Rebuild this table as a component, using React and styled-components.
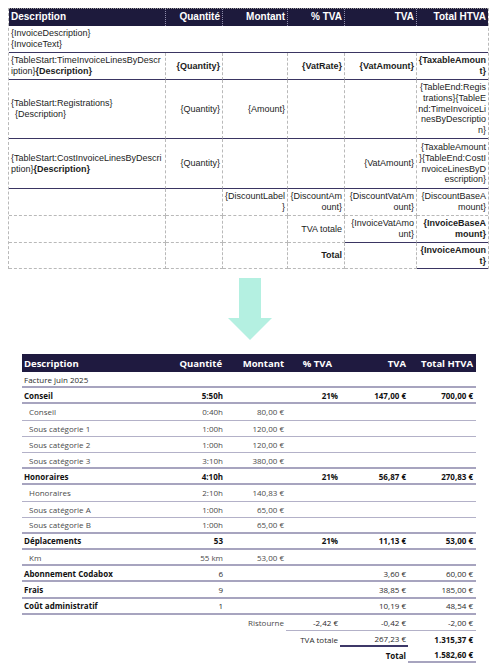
import React from 'react'
import styled, { createGlobalStyle } from 'styled-components'

const GlobalStyle = createGlobalStyle`
  body {
    margin: 0;
    background: #ffffff;
  }
`

const Page = styled.div`
  width: 493px;
  padding: 8px;
  box-sizing: border-box;
  display: flex;
  flex-direction: column;
`

/* ---------- template table (top) ---------- */

const TplTable = styled.div`
  width: 481px;
  box-sizing: border-box;
  border-left: 1px dashed #b9b9b9;
  border-right: 1px dashed #b9b9b9;
  font-family: "Liberation Sans", Arial, sans-serif;
  font-size: 9px;
  line-height: 10.8px;
  color: #1c1c1c;
`

const TplRow = styled.div`
  display: grid;
  grid-template-columns: 157px 57px 65px 57px 72px 71px;
  height: ${p => p.$h}px;
`

const TplHead = styled(TplRow)`
  background: #1d1a3c;
  color: #ffffff;
  font-size: 10px;
  font-weight: bold;
  border-top: 1px dotted #9a9a9a;
`

const TplCell = styled.div`
  display: flex;
  align-items: center;
  justify-content: ${p => (p.$right ? 'flex-end' : 'flex-start')};
  text-align: ${p => (p.$right ? 'right' : 'left')};
  padding: 0 2px;
  box-sizing: border-box;
  white-space: nowrap;
  grid-column: ${p => (p.$span ? `span ${p.$span}` : 'auto')};
  border-right: ${p => (p.$last ? 'none' : '1px dashed #b9b9b9')};
  border-bottom: ${p => (p.$solid ? '1px solid #3a3562' : '1px dashed #b9b9b9')};
  font-weight: ${p => (p.$bold ? 'bold' : 'normal')};
`

const TplHeadCell = styled(TplCell)`
  border-right: ${p => (p.$last ? 'none' : '1px dotted #8f8cab')};
  border-bottom: none;
  font-weight: bold;
`

const Indent = styled.span`
  padding-left: 4px;
`

/* ---------- arrow ---------- */

const ArrowWrap = styled.div`
  width: 481px;
  display: flex;
  justify-content: center;
  margin-top: 9px;
  padding-left: 2px;
  box-sizing: border-box;
`

/* ---------- rendered table (bottom) ---------- */

const Invoice = styled.div`
  width: 454px;
  margin: 14px 0 0 14px;
  font-family: "Open Sans", "Noto Sans", sans-serif;
  font-size: 8px;
  color: #2b2b2b;
`

const InvRow = styled.div`
  display: grid;
  grid-template-columns: 149px 54px 61px 54px 68px 68px;
  height: ${p => p.$h || 16.2}px;
  box-sizing: border-box;
  border-bottom: ${p => (p.$thick ? '2px solid #a7a4bf' : p.$thin ? '1px solid #b3b1c8' : 'none')};
`

const InvHead = styled(InvRow)`
  background: #1f1a40;
  color: #ffffff;
  font-size: 9.5px;
  font-weight: 700;
`

const InvCell = styled.div`
  display: flex;
  align-items: center;
  justify-content: ${p => (p.$right ? 'flex-end' : 'flex-start')};
  padding: 0 ${p => p.$pr ?? 2}px 0 ${p => (p.$indent ? 7 : 2)}px;
  box-sizing: border-box;
  white-space: nowrap;
  font-weight: ${p => (p.$bold ? 700 : 'inherit')};
  color: ${p => (p.$bold ? '#111111' : p.$sub ? '#4a4a4a' : 'inherit')};
  border-bottom: ${p => p.$line || 'none'};
`

const lines = [
  { d: 'Facture juin 2025' },
  { d: 'Conseil', g: true, bv: true, q: '5:50h', r: '21%', v: '147,00 €', t: '700,00 €' },
  { d: 'Conseil', sub: true, q: '0:40h', m: '80,00 €' },
  { d: 'Sous catégorie 1', sub: true, q: '1:00h', m: '120,00 €' },
  { d: 'Sous catégorie 2', sub: true, q: '1:00h', m: '120,00 €' },
  { d: 'Sous catégorie 3', sub: true, q: '3:10h', m: '380,00 €' },
  { d: 'Honoraires', g: true, bv: true, q: '4:10h', r: '21%', v: '56,87 €', t: '270,83 €' },
  { d: 'Honoraires', sub: true, q: '2:10h', m: '140,83 €' },
  { d: 'Sous catégorie A', sub: true, q: '1:00h', m: '65,00 €' },
  { d: 'Sous catégorie B', sub: true, q: '1:00h', m: '65,00 €' },
  { d: 'Déplacements', g: true, bv: true, q: '53', r: '21%', v: '11,13 €', t: '53,00 €' },
  { d: 'Km', sub: true, q: '55 km', m: '53,00 €' },
  { d: 'Abonnement Codabox', g: true, q: '6', v: '3,60 €', t: '60,00 €' },
  { d: 'Frais', g: true, q: '9', v: '38,85 €', t: '185,00 €' },
  { d: 'Coût administratif', g: true, q: '1', v: '10,19 €', t: '48,54 €' },
]

const thin = '1px solid #b3b1c8'
const navy = '2px solid #3d3868'
const lav = '2px solid #a7a4bf'

function TemplateTable() {
  return (
    <TplTable>
      <TplHead $h={17}>
        <TplHeadCell>Description</TplHeadCell>
        <TplHeadCell $right>Quantité</TplHeadCell>
        <TplHeadCell $right>Montant</TplHeadCell>
        <TplHeadCell $right>% TVA</TplHeadCell>
        <TplHeadCell $right>TVA</TplHeadCell>
        <TplHeadCell $right $last>Total HTVA</TplHeadCell>
      </TplHead>

      <TplRow $h={27}>
        <TplCell $span={6} $last $solid>
          <span>{'{InvoiceDescription}'}<br />{'{InvoiceText}'}</span>
        </TplCell>
      </TplRow>

      <TplRow $h={27}>
        <TplCell $solid>
          <span>{'{TableStart:TimeInvoiceLinesByDescr'}<br />{'iption}'}<b>{'{Description}'}</b></span>
        </TplCell>
        <TplCell $right $bold $solid>{'{Quantity}'}</TplCell>
        <TplCell $solid />
        <TplCell $right $bold $solid>{'{VatRate}'}</TplCell>
        <TplCell $right $bold $solid>{'{VatAmount}'}</TplCell>
        <TplCell $right $bold $solid $last>
          <span>{'{TaxableAmoun'}<br />{'t}'}</span>
        </TplCell>
      </TplRow>

      <TplRow $h={59}>
        <TplCell $solid>
          <span>{'{TableStart:Registrations}'}<br /><Indent>{'{Description}'}</Indent></span>
        </TplCell>
        <TplCell $right $solid>{'{Quantity}'}</TplCell>
        <TplCell $right $solid>{'{Amount}'}</TplCell>
        <TplCell $solid />
        <TplCell $solid />
        <TplCell $right $solid $last>
          <span>
            {'{TableEnd:Regis'}<br />{'trations}{TableE'}<br />{'nd:TimeInvoiceLi'}<br />
            {'nesByDescriptio'}<br />{'n}'}
          </span>
        </TplCell>
      </TplRow>

      <TplRow $h={50}>
        <TplCell $solid>
          <span>{'{TableStart:CostInvoiceLinesByDescri'}<br />{'ption}'}<b>{'{Description}'}</b></span>
        </TplCell>
        <TplCell $right $solid>{'{Quantity}'}</TplCell>
        <TplCell $solid />
        <TplCell $solid />
        <TplCell $right $solid>{'{VatAmount}'}</TplCell>
        <TplCell $right $solid $last>
          <span>
            {'{TaxableAmount'}<br />{'}{TableEnd:CostI'}<br />{'nvoiceLinesByD'}<br />{'escription}'}
          </span>
        </TplCell>
      </TplRow>

      <TplRow $h={27}>
        <TplCell />
        <TplCell />
        <TplCell $right><span>{'{DiscountLabel'}<br />{'}'}</span></TplCell>
        <TplCell $right><span>{'{DiscountAm'}<br />{'ount}'}</span></TplCell>
        <TplCell $right><span>{'{DiscountVatAm'}<br />{'ount}'}</span></TplCell>
        <TplCell $right $last><span>{'{DiscountBaseA'}<br />{'mount}'}</span></TplCell>
      </TplRow>

      <TplRow $h={27}>
        <TplCell />
        <TplCell />
        <TplCell />
        <TplCell $right>TVA totale</TplCell>
        <TplCell $right $solid><span>{'{InvoiceVatAmo'}<br />{'unt}'}</span></TplCell>
        <TplCell $right $bold $solid $last><span>{'{InvoiceBaseA'}<br />{'mount}'}</span></TplCell>
      </TplRow>

      <TplRow $h={26}>
        <TplCell />
        <TplCell />
        <TplCell />
        <TplCell $right $bold>Total</TplCell>
        <TplCell />
        <TplCell $right $bold $solid $last><span>{'{InvoiceAmoun'}<br />{'t}'}</span></TplCell>
      </TplRow>
    </TplTable>
  )
}

function Arrow() {
  return (
    <ArrowWrap>
      <svg width="44" height="62" viewBox="0 0 44 62">
        <rect x="11" y="0" width="22" height="41" fill="#b4f0e1" />
        <polygon points="0,40 44,40 22,62" fill="#b4f0e1" />
      </svg>
    </ArrowWrap>
  )
}

function InvoiceTable() {
  return (
    <Invoice>
      <InvHead $h={18}>
        <InvCell>Description</InvCell>
        <InvCell $right $pr={3}>Quantité</InvCell>
        <InvCell $right>Montant</InvCell>
        <InvCell $right $pr={8}>% TVA</InvCell>
        <InvCell $right>TVA</InvCell>
        <InvCell $right $pr={3}>Total HTVA</InvCell>
      </InvHead>

      {lines.map((l, i) => {
        const next = lines[i + 1]
        const thick = i === 0 || l.g || (next && next.g) || !next
        return (
          <InvRow key={i} $thick={thick} $thin={!thick}>
            <InvCell $bold={l.g} $sub={l.sub} $indent={l.sub}>{l.d}</InvCell>
            <InvCell $right $bold={l.bv} $sub={l.sub}>{l.q}</InvCell>
            <InvCell $right $sub={l.sub}>{l.m}</InvCell>
            <InvCell $right $bold={l.bv}>{l.r}</InvCell>
            <InvCell $right $bold={l.bv}>{l.v}</InvCell>
            <InvCell $right $pr={3} $bold={l.bv}>{l.t}</InvCell>
          </InvRow>
        )
      })}

      <InvRow>
        <InvCell />
        <InvCell />
        <InvCell $right $sub>Ristourne</InvCell>
        <InvCell $right $line={thin}>-2,42 €</InvCell>
        <InvCell $right $line={thin}>-0,42 €</InvCell>
        <InvCell $right $pr={3} $line={thin}>-2,00 €</InvCell>
      </InvRow>
      <InvRow>
        <InvCell />
        <InvCell />
        <InvCell />
        <InvCell $right>TVA totale</InvCell>
        <InvCell $right $line={navy}>267,23 €</InvCell>
        <InvCell $right $pr={3} $bold>1.315,37 €</InvCell>
      </InvRow>
      <InvRow>
        <InvCell />
        <InvCell />
        <InvCell />
        <InvCell />
        <InvCell $right $bold>Total</InvCell>
        <InvCell $right $pr={3} $bold $line={lav}>1.582,60 €</InvCell>
      </InvRow>
    </Invoice>
  )
}

export default function App() {
  return (
    <Page>
      <GlobalStyle />
      <TemplateTable />
      <Arrow />
      <InvoiceTable />
    </Page>
  )
}
